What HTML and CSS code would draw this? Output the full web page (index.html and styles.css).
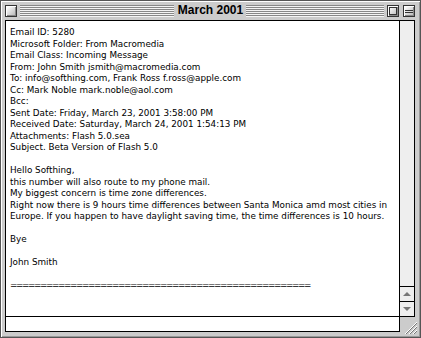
FILE: index.html
```html
<!DOCTYPE html>
<html lang="en">
<head>
    <meta charset="UTF-8">
    <meta name="viewport" content="width=device-width, initial-scale=1.0">
    <title>March 2001</title>
    <link rel="stylesheet" href="styles.css">
</head>
<body>
    <div class="window">
        <div class="titlebar">
            <div class="side">
                <span class="box close-box"></span>
                <span class="stripes"></span>
            </div>
            <div class="title">March 2001</div>
            <div class="side">
                <span class="stripes"></span>
                <span class="box zoom-box"><span class="inner"></span></span>
                <span class="box collapse-box"></span>
            </div>
        </div>

        <div class="main">
            <div class="message">
                Email ID: 5280<br>
                Microsoft Folder: From Macromedia<br>
                Email Class: Incoming Message<br>
                From: John Smith jsmith@macromedia.com<br>
                To: info@softhing.com, Frank Ross f.ross@apple.com<br>
                Cc: Mark Noble mark.noble@aol.com<br>
                Bcc:<br>
                Sent Date: Friday, March 23, 2001 3:58:00 PM<br>
                Received Date: Saturday, March 24, 2001 1:54:13 PM<br>
                Attachments: Flash 5.0.sea<br>
                Subject. Beta Version of Flash 5.0<br>
                <br>
                Hello Softhing,<br>
                this number will also route to my phone mail.<br>
                My biggest concern is time zone differences.<br>
                Right now there is 9 hours time differences between Santa Monica amd most cities in<br>
                Europe. If you happen to have daylight saving time, the time differences is 10 hours.<br>
                <br>
                Bye<br>
                <br>
                John Smith<br>
                <br>
                <span class="rule">==================================================</span>
            </div>
            <div class="scrollbar">
                <div class="track"></div>
                <div class="arrow"><span class="up"></span></div>
                <div class="arrow"><span class="down"></span></div>
            </div>
        </div>

        <div class="footer">
            <input type="text" class="field">
            <div class="grow-cell"></div>
        </div>

        <svg class="grow" width="16" height="16" viewBox="0 0 16 16">
            <path d="M3 15 L15 3 M7 15 L15 7 M11 15 L15 11" stroke="#fff" stroke-width="1"/>
            <path d="M4 15 L15 4 M8 15 L15 8 M12 15 L15 12" stroke="#777" stroke-width="1"/>
        </svg>
    </div>
</body>
</html>
```

FILE: styles.css
```css
body {
    margin: 0;
    background-color: #fff;
    font-family: "DejaVu Sans", Verdana, sans-serif;
}

.window {
    position: relative;
    width: 421px;
    height: 338px;
    box-sizing: border-box;
    border: 1px solid #555;
    background-color: #ccc;
    box-shadow: inset 1px 1px 0 #fff, inset -1px -1px 0 #999;
    display: flex;
    flex-direction: column;
}

/* title bar */

.titlebar {
    height: 19px;
    flex-shrink: 0;
    display: grid;
    grid-template-columns: 1fr auto 1fr;
    align-items: center;
    padding: 0 5px 0 4px;
}

.side {
    display: flex;
    align-items: center;
    height: 12px;
}

.stripes {
    flex: 1;
    height: 12px;
    background: repeating-linear-gradient(#888 0 1px, #f4f4f4 1px 2px);
}

.side .box + .stripes {
    margin-left: 3px;
}

.side .stripes + .box {
    margin-left: 3px;
}

.box {
    position: relative;
    width: 12px;
    height: 12px;
    box-sizing: border-box;
    border: 1px solid #333;
    background: linear-gradient(135deg, #fff 10%, #bbb 90%);
    box-shadow: inset 1px 1px 0 #fff, inset -1px -1px 0 #888;
}

.zoom-box .inner {
    position: absolute;
    left: 1px;
    top: 1px;
    width: 6px;
    height: 6px;
    border: 1px solid #333;
}

.collapse-box {
    margin-left: 4px;
}

.collapse-box::before {
    content: "";
    position: absolute;
    left: 1px;
    right: 1px;
    top: 4px;
    height: 1px;
    border-top: 1px solid #333;
    border-bottom: 1px solid #333;
}

.title {
    font-family: "Liberation Sans", Arial, sans-serif;
    font-weight: bold;
    font-size: 12px;
    padding: 0 3px 0 4px;
    color: #000;
    line-height: 19px;
}

/* message area */

.main {
    display: flex;
    height: 297px;
    flex-shrink: 0;
    margin: 0 5px 0 4px;
    box-sizing: border-box;
    border: 1px solid #000;
}

.message {
    flex: 1;
    background-color: #fff;
    padding: 6px 4px 0 4px;
    font-size: 8.8px;
    line-height: 11.5px;
    color: #000;
    white-space: nowrap;
    overflow: hidden;
}

.rule {
    letter-spacing: -1.37px;
}

.scrollbar {
    width: 15px;
    box-sizing: border-box;
    border-left: 1px solid #000;
    background-color: #eee;
    display: flex;
    flex-direction: column;
}

.track {
    flex: 1;
}

.arrow {
    height: 15px;
    box-sizing: border-box;
    border-top: 1px solid #000;
    display: flex;
    align-items: center;
    justify-content: center;
}

.up {
    width: 0;
    height: 0;
    border-left: 4px solid transparent;
    border-right: 4px solid transparent;
    border-bottom: 4px solid #777;
}

.down {
    width: 0;
    height: 0;
    border-left: 4px solid transparent;
    border-right: 4px solid transparent;
    border-top: 4px solid #777;
}

/* bottom entry line */

.footer {
    display: flex;
    height: 15px;
    margin: 0 5px 0 4px;
}

.field {
    width: 395px;
    height: 15px;
    box-sizing: border-box;
    margin: 0;
    padding: 0;
    border: 1px solid #000;
    border-top: none;
    background-color: #fff;
    outline: none;
}

.grow-cell {
    flex: 1;
}

.grow {
    position: absolute;
    right: 2px;
    bottom: 2px;
}
```
